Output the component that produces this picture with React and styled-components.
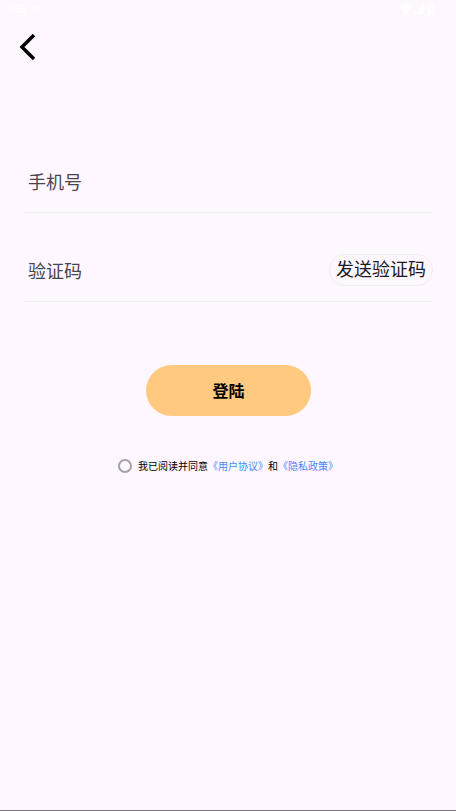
import * as React from 'react';
import styled, { createGlobalStyle } from 'styled-components';

const GlobalStyle = createGlobalStyle`
  * {
    box-sizing: border-box;
  }

  body {
    margin: 0;
    background: #fef7ff;
    font-family: Roboto, 'Noto Sans CJK SC', sans-serif;
  }

  button,
  input {
    font-family: inherit;
  }
`;

const Page = styled.div`
  display: flex;
  flex-direction: column;
  min-height: 100vh;
  border-bottom: 1px solid #757575;
`;

const StatusBar = styled.div`
  display: flex;
  align-items: center;
  justify-content: space-between;
  height: 18px;
  padding: 0 20px 0 6px;
  color: #fff;
  font-size: 10px;
  font-weight: 500;
`;

const StatusGroup = styled.div`
  display: flex;
  align-items: center;
  gap: ${props => (props.$wide ? '8px' : '2px')};
`;

const Header = styled.header`
  display: flex;
  height: 58px;
  padding: 5px 7px;
`;

const BackButton = styled.button`
  display: flex;
  align-items: center;
  justify-content: center;
  width: 40px;
  height: 48px;
  padding: 0;
  border: 0;
  background: none;
  color: #000;
`;

const Form = styled.form`
  display: flex;
  flex-direction: column;
  padding: 76px 23px 0 24px;
`;

const Field = styled.div`
  display: flex;
  align-items: center;
  height: 61px;
  margin-bottom: 28px;
  padding-bottom: 3px;
  border-bottom: 1px solid #f0eef1;
`;

const TextInput = styled.input`
  flex: 1;
  min-width: 0;
  height: 56px;
  padding: 4px 4px 0;
  border: 0;
  outline: none;
  background: none;
  color: #1d1b20;
  font-size: 18px;

  &::placeholder {
    color: #49454f;
    opacity: 1;
  }
`;

const CodeButton = styled.button`
  height: 32px;
  padding: 0 6px;
  border: 1px solid #f0eef1;
  border-radius: 16px;
  background: none;
  color: #1d1b20;
  font-size: 18px;
  line-height: 28px;
  white-space: nowrap;
`;

const LoginButton = styled.button`
  align-self: center;
  width: 165px;
  height: 51px;
  margin-top: 35px;
  padding: 0 6px 2px;
  border: 0;
  border-radius: 26px;
  background: #ffc980;
  color: #000;
  font-size: 16px;
  font-weight: 700;
`;

const Consent = styled.div`
  display: flex;
  align-items: center;
  justify-content: center;
  gap: 6px;
  margin-top: 39px;
  padding-right: 1px;
  color: #000;
  font-size: 10px;
  line-height: 20px;
`;

const ConsentText = styled.span`
  padding-top: 2px;
`;

const Radio = styled.input`
  appearance: none;
  width: 14px;
  height: 14px;
  margin: 0;
  border: 2px solid #a5a1a8;
  border-radius: 50%;

  &:checked {
    background: #ffc980;
  }
`;

const Link = styled.a`
  color: #448aff;
  text-decoration: none;
`;

const ShieldIcon = () => (
  <svg width="6" height="7" viewBox="0 0 6 7" fill="none" stroke="currentColor">
    <path d="M1 1h4v2.5L3 6 1 3.5z" />
  </svg>
);

const WifiIcon = () => (
  <svg width="12" height="10" viewBox="0 0 12 10" fill="currentColor">
    <path d="M0 2.5C3.5-.5 8.5-.5 12 2.5L6 10z" />
  </svg>
);

const SignalIcon = () => (
  <svg width="10" height="10" viewBox="0 0 10 10" fill="currentColor">
    <path d="M10 0v10H0z" />
  </svg>
);

const BatteryIcon = () => (
  <svg width="10" height="11" viewBox="0 0 10 11">
    <path d="M4 0h3v1h2v10H2V1h2z" fill="currentColor" />
    <path d="M6 3L4 6h1.5v3l2-3.5H6z" fill="#fef7ff" />
  </svg>
);

const BackIcon = () => (
  <svg
    width="18"
    height="28"
    viewBox="0 0 18 28"
    fill="none"
    stroke="currentColor"
    strokeWidth="3.5"
  >
    <path d="M16 2L4 14l12 12" />
  </svg>
);

const App = () => (
  <React.Fragment>
    <GlobalStyle />
    <Page>
      <StatusBar>
        <StatusGroup $wide>
          <span>9:56</span>
          <ShieldIcon />
        </StatusGroup>
        <StatusGroup>
          <WifiIcon />
          <SignalIcon />
          <BatteryIcon />
        </StatusGroup>
      </StatusBar>
      <Header>
        <BackButton type="button" aria-label="返回">
          <BackIcon />
        </BackButton>
      </Header>
      <Form onSubmit={ev => ev.preventDefault()}>
        <Field>
          <TextInput type="tel" aria-label="手机号" placeholder="手机号" />
        </Field>
        <Field>
          <TextInput
            inputMode="numeric"
            aria-label="验证码"
            placeholder="验证码"
          />
          <CodeButton type="button">发送验证码</CodeButton>
        </Field>
        <LoginButton type="submit">登陆</LoginButton>
        <Consent>
          <Radio type="radio" id="consent" name="consent" />
          <ConsentText>
            <label htmlFor="consent">我已阅读并同意</label>
            <Link href="#terms">《用户协议》</Link>
            和
            <Link href="#privacy">《隐私政策》</Link>
          </ConsentText>
        </Consent>
      </Form>
    </Page>
  </React.Fragment>
);

export default App;
